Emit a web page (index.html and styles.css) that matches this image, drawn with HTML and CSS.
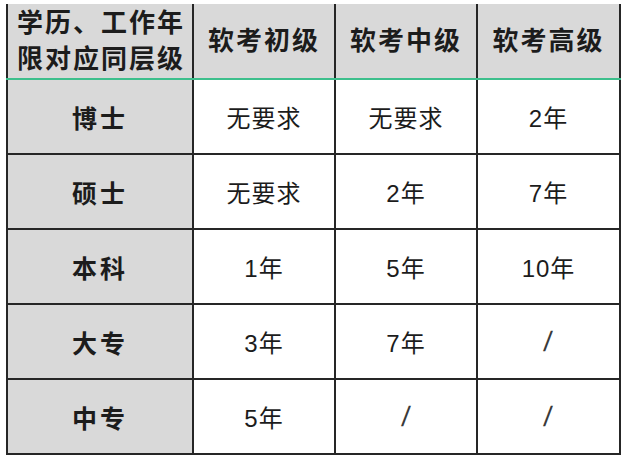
FILE: index.html
```html
<!DOCTYPE html>
<html lang="zh-CN">
<head>
<meta charset="utf-8">
<title>软考学历对应表</title>
<link rel="stylesheet" href="styles.css">
</head>
<body>
<table class="grid">
  <colgroup>
    <col class="c1"><col class="c2"><col class="c3"><col class="c4">
  </colgroup>
  <thead>
    <tr class="head">
      <th class="first">学历、工作年<br>限对应同层级</th>
      <th>软考初级</th>
      <th>软考中级</th>
      <th>软考高级</th>
    </tr>
  </thead>
  <tbody>
    <tr><th class="label">博士</th><td>无要求</td><td>无要求</td><td>2年</td></tr>
    <tr><th class="label">硕士</th><td>无要求</td><td>2年</td><td>7年</td></tr>
    <tr><th class="label">本科</th><td>1年</td><td>5年</td><td>10年</td></tr>
    <tr><th class="label">大专</th><td>3年</td><td>7年</td><td><span class="slash">/</span></td></tr>
    <tr><th class="label">中专</th><td>5年</td><td><span class="slash">/</span></td><td><span class="slash">/</span></td></tr>
  </tbody>
</table>
</body>
</html>
```
FILE: styles.css
```css
html, body {
  margin: 0;
  padding: 0;
  background: #ffffff;
}
body {
  padding: 4px 0 0 6px;
  font-family: "Liberation Sans", "Noto Sans CJK SC", sans-serif;
  color: #1c1c1c;
}
.grid {
  border-collapse: collapse;
  table-layout: fixed;
  width: 613px;
}
.c1 { width: 186px; }
.c2 { width: 142px; }
.c3 { width: 142px; }
.c4 { width: 143px; }

.grid th,
.grid td {
  border: 2px solid #262626;
  text-align: center;
  vertical-align: middle;
  padding: 0;
}
.head th {
  background: #d9d9d9;
  border-top: none;
  border-bottom: 2px solid #3dbf8c;
  height: 74px;
  font-size: 26px;
  font-weight: 700;
  letter-spacing: 2px;
  line-height: 36px;
}
.head th.first {
  font-size: 26px;
  letter-spacing: 2px;
  padding-left: 2px;
}
.grid tbody tr {
  height: 75px;
}
.label {
  background: #d9d9d9;
  font-size: 25px;
  font-weight: 700;
  letter-spacing: 3px;
}
.grid td {
  font-size: 24px;
  font-weight: 400;
  background: #ffffff;
  letter-spacing: 1px;
}
.slash {
  display: inline-block;
  font-family: "Liberation Sans", sans-serif;
  font-weight: 400;
  font-size: 28px;
  color: #3a3a3a;
  transform: skewX(-6deg);
}
```
